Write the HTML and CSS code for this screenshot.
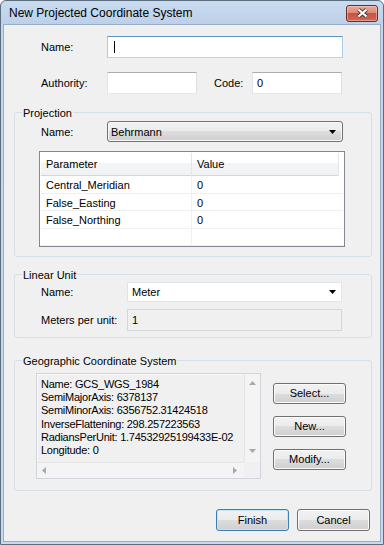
FILE: index.html
```html
<!DOCTYPE html>
<html lang="en">
<head>
    <meta charset="UTF-8">
    <title>New Projected Coordinate System</title>
    <link rel="stylesheet" href="styles.css">
</head>
<body>
<div class="window">
    <div class="titlebar">
        <span class="title">New Projected Coordinate System</span>
        <div class="close">
            <svg width="13" height="10" viewBox="0 0 13 10">
                <path d="M2.5 1.5 L10.5 8.5 M10.5 1.5 L2.5 8.5" stroke="#4b3b3b" stroke-width="4"/>
                <path d="M2.5 1.5 L10.5 8.5 M10.5 1.5 L2.5 8.5" stroke="#ffffff" stroke-width="2.2"/>
            </svg>
        </div>
    </div>

    <div class="client">
        <div class="row top-row">
            <span class="label w66">Name:</span>
            <div class="field focus wide"><span class="caret"></span></div>
        </div>
        <div class="row top-row second">
            <span class="label w66">Authority:</span>
            <div class="field short"></div>
            <span class="label code-label">Code:</span>
            <div class="field short">0</div>
        </div>

        <div class="group proj">
            <div class="group-title">Projection</div>
            <div class="row">
                <span class="label w66">Name:</span>
                <div class="combo combo-btn">
                    <span>Behrmann</span>
                    <svg width="7" height="4" viewBox="0 0 7 4"><path d="M0 0 H7 L3.5 4Z" fill="#000"/></svg>
                </div>
            </div>
            <div class="params">
                <div class="prow head">
                    <div class="cell">Parameter</div>
                    <div class="cell">Value</div>
                </div>
                <div class="prow">
                    <div class="cell">Central_Meridian</div>
                    <div class="cell">0</div>
                </div>
                <div class="prow">
                    <div class="cell">False_Easting</div>
                    <div class="cell">0</div>
                </div>
                <div class="prow">
                    <div class="cell">False_Northing</div>
                    <div class="cell">0</div>
                </div>
                <div class="prow">
                    <div class="cell"></div>
                    <div class="cell"></div>
                </div>
            </div>
        </div>

        <div class="group lin">
            <div class="group-title">Linear Unit</div>
            <div class="row">
                <span class="label w86">Name:</span>
                <div class="combo combo-white">
                    <span>Meter</span>
                    <svg width="7" height="4" viewBox="0 0 7 4"><path d="M0 0 H7 L3.5 4Z" fill="#000"/></svg>
                </div>
            </div>
            <div class="row meters">
                <span class="label w86">Meters per unit:</span>
                <div class="field readonly">1</div>
            </div>
        </div>

        <div class="group gcs">
            <div class="group-title">Geographic Coordinate System</div>
            <div class="gcs-body">
                <div class="info">
                    <div class="info-text">
                        Name: GCS_WGS_1984<br>
                        SemiMajorAxis: 6378137<br>
                        SemiMinorAxis: 6356752.31424518<br>
                        InverseFlattening: 298.257223563<br>
                        RadiansPerUnit: 1.74532925199433E-02<br>
                        Longitude: 0
                    </div>
                    <div class="vscroll">
                        <svg width="7" height="4" viewBox="0 0 7 4"><path d="M0 4 L3.5 0 L7 4Z" fill="#a8a8a8"/></svg>
                        <svg width="7" height="4" viewBox="0 0 7 4"><path d="M0 0 H7 L3.5 4Z" fill="#a8a8a8"/></svg>
                    </div>
                    <div class="hscroll">
                        <svg width="4" height="7" viewBox="0 0 4 7"><path d="M4 0 V7 L0 3.5Z" fill="#a8a8a8"/></svg>
                        <svg width="4" height="7" viewBox="0 0 4 7"><path d="M0 0 V7 L4 3.5Z" fill="#a8a8a8"/></svg>
                    </div>
                    <div class="corner"></div>
                </div>
                <div class="side">
                    <div class="btn">Select...</div>
                    <div class="btn">New...</div>
                    <div class="btn">Modify...</div>
                </div>
            </div>
        </div>

        <div class="footer">
            <div class="btn big default">Finish</div>
            <div class="btn big">Cancel</div>
        </div>
    </div>
</div>
</body>
</html>
```

FILE: styles.css
```css
* {
    box-sizing: border-box;
}
body {
    margin: 0;
    font-family: "Liberation Sans", Arial, sans-serif;
    font-size: 11px;
    color: #000;
    background: #ffffff;
}
.window {
    width: 384px;
    height: 545px;
    border: 1px solid #5d6d80;
    border-radius: 6px 6px 0 0;
    background: linear-gradient(#c9dbef, #bcd0e7 23px, #c3d6ec 24px, #c6d9ee);
    padding: 0 2px 2px;
    display: flex;
    flex-direction: column;
}
.titlebar {
    height: 23px;
    display: flex;
    align-items: center;
    justify-content: space-between;
    padding: 0 3px 0 6px;
}
.title {
    font-size: 12px;
    color: #000;
}
.close {
    width: 32px;
    height: 17px;
    margin-top: 1px;
    border: 1px solid #6e2b22;
    border-radius: 3px;
    background: linear-gradient(#e9aa9c, #dc8a78 45%, #c8523e 50%, #cd6a55);
    box-shadow: inset 0 0 0 1px rgba(255, 220, 210, 0.45);
    display: flex;
    align-items: center;
    justify-content: center;
}
.client {
    flex: 1;
    border: 1px solid #97adc8;
    background: #f0f0f0;
    padding: 0 8px 0 10px;
}
.row {
    display: flex;
    align-items: center;
}
.label {
    flex: none;
}
.w66 {
    width: 66px;
}
.w86 {
    width: 86px;
}
.top-row {
    margin-top: 11px;
    padding-left: 27px;
    height: 22px;
}
.top-row.second {
    margin-top: 14px;
}
.code-label {
    width: 38px;
    margin-left: 17px;
}
.field {
    height: 22px;
    background: #ffffff;
    border: 1px solid;
    border-color: #abadb3 #dbdfe6 #e3e9ef #e2e3ea;
    padding: 0 4px;
    line-height: 20px;
}
.field.wide {
    width: 236px;
}
.field.short {
    width: 90px;
}
.field.focus {
    border-color: #5f95c2 #a9cde8 #b7d6ee #a9cde8;
    padding-left: 6px;
    padding-top: 4px;
}
.caret {
    display: block;
    width: 1px;
    height: 12px;
    background: #000;
}
.field.readonly {
    width: 215px;
    background: #f0f0f0;
    border-color: #d3d7dc;
}
.group {
    border: 1px solid #d5dfe5;
    border-radius: 3px;
}
.group-title {
    width: max-content;
    margin: -7px 0 0 7px;
    padding: 0 1px;
    background: #f0f0f0;
    line-height: 14px;
}
.proj {
    margin-top: 18px;
    padding-bottom: 9px;
}
.proj .row {
    margin-top: 1px;
    padding-left: 26px;
    height: 21px;
}
.combo {
    display: flex;
    align-items: center;
    justify-content: space-between;
}
.combo-btn {
    width: 236px;
    height: 21px;
    border: 1px solid #707070;
    border-radius: 3px;
    background: linear-gradient(#f2f2f2, #ebebeb 50%, #dddddd 50%, #cfcfcf);
    box-shadow: inset 0 0 0 1px #fafafa;
    padding: 0 6px 0 3px;
}
.params {
    margin: 9px 0 0 24px;
    width: 306px;
    height: 96px;
    border: 1px solid #828790;
    padding: 1px;
    background: #ffffff;
    overflow: hidden;
}
.prow {
    display: grid;
    grid-template-columns: 151px 1fr;
    height: 17.5px;
    line-height: 18px;
    border-bottom: 1px solid #f0f0f0;
}
.prow .cell {
    padding-left: 5px;
    white-space: nowrap;
}
.prow .cell:first-child {
    border-right: 1px solid #f0f0f0;
}
.prow.head {
    height: 23px;
    line-height: 23px;
    background: linear-gradient(#ffffff, #ffffff 45%, #f4f5f7 46%, #f1f2f4);
    border-bottom: 1px solid #d5d5d5;
    margin-right: 4px;
}
.prow.head .cell:first-child {
    border-right: 1px solid #e3e5e8;
}
.prow.head .cell:last-child {
    border-right: 1px solid #e3e5e8;
}
.lin {
    margin-top: 17px;
    padding-bottom: 6px;
}
.lin .row {
    padding-left: 26px;
}
.combo-white {
    width: 215px;
    height: 20px;
    background: #ffffff;
    border: 1px solid #e0e4ea;
    padding: 0 5px 0 4px;
}
.meters {
    margin-top: 7px;
}
.gcs {
    margin-top: 22px;
    padding-bottom: 11px;
}
.gcs-body {
    display: flex;
    align-items: flex-start;
    gap: 12px;
    margin-top: 5px;
    padding-left: 21px;
}
.info {
    width: 225px;
    height: 106px;
    border: 1px solid #d0d5db;
    box-shadow: inset 1px 1px 0 #fbfbfb;
    background: #f0f0f0;
    display: grid;
    grid-template-columns: 1fr 16px;
    grid-template-rows: 1fr 16px;
}
.info-text {
    padding: 4px 0 0 4px;
    line-height: 13.2px;
    letter-spacing: -0.25px;
    white-space: nowrap;
    overflow: hidden;
}
.vscroll {
    display: flex;
    flex-direction: column;
    align-items: center;
    justify-content: space-between;
    padding: 7px 0 9px;
    background: #f4f4f4;
    border-left: 1px solid #e6e6e6;
}
.hscroll {
    display: flex;
    align-items: center;
    justify-content: space-between;
    padding: 0 7px 0 5px;
    background: #f4f4f4;
    border-top: 1px solid #e6e6e6;
}
.corner {
    background: #f0f0f0;
}
.side {
    display: flex;
    flex-direction: column;
    gap: 12px;
    margin-top: 10px;
}
.btn {
    width: 73px;
    height: 21px;
    border: 1px solid #707070;
    border-radius: 3px;
    background: linear-gradient(#f2f2f2, #ebebeb 50%, #dddddd 50%, #cfcfcf);
    box-shadow: inset 0 0 0 1px #fbfbfb;
    text-align: center;
    line-height: 19px;
}
.footer {
    display: flex;
    justify-content: flex-end;
    gap: 8px;
    margin-top: 18px;
    padding-right: 2px;
}
.btn.big {
    height: 22px;
    line-height: 20px;
}
.btn.default {
    border-color: #3c7fb1;
    box-shadow: inset 0 0 0 1px #bfe6f8;
}
```
